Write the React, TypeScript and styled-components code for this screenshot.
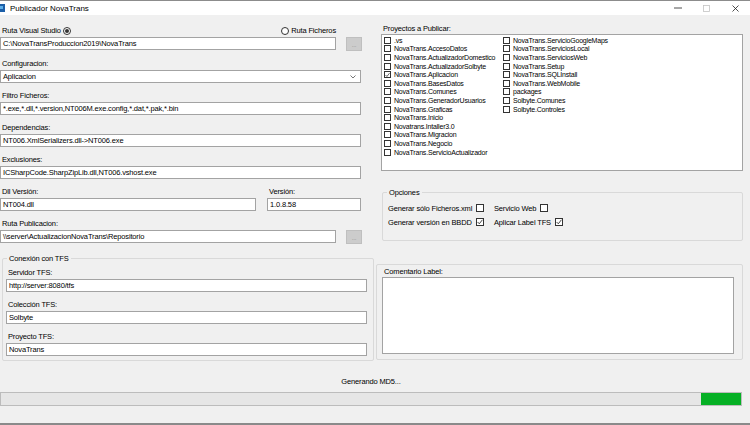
import React from 'react'
import styled, { createGlobalStyle } from 'styled-components'

const GlobalStyle = createGlobalStyle`
  html, body {
    margin: 0;
    padding: 0;
    background: #f0f0f0;
    overflow: hidden;
  }
  body {
    font-family: "Liberation Sans", Arial, sans-serif;
    font-size: 7.5px;
    letter-spacing: -0.15px;
    color: #000;
  }
  * { box-sizing: border-box; }
`

const Window = styled.div`
  width: 750px;
  height: 425px;
  display: flex;
  flex-direction: column;
  background: #f0f0f0;
  overflow: hidden;
`

const TitleBar = styled.div`
  height: 15px;
  flex: none;
  display: flex;
  align-items: center;
  background: #fff;
  border-top: 1px solid #8c8c8c;
`

const AppIcon = styled.svg`
  flex: none;
  margin-right: 5px;
`

const Title = styled.span`
  flex: 1;
  font-size: 8px;
  letter-spacing: 0;
`

const CtrlButton = styled.div`
  width: 29px;
  height: 14px;
  display: flex;
  align-items: center;
  justify-content: center;
`

const Main = styled.div`
  display: grid;
  grid-template-columns: 375px 375px;
  flex: none;
`

const LeftCol = styled.div`
  display: flex;
  flex-direction: column;
  gap: 8px;
  padding-top: 11px;
`

const RightCol = styled.div`
  display: flex;
  flex-direction: column;
  padding: 9px 7px 0 1px;
`

const Field = styled.div<{ $w?: number }>`
  display: flex;
  flex-direction: column;
  gap: 2px;
  width: ${p => (p.$w ? `${p.$w}px` : 'auto')};
`

const Label = styled.div`
  height: 9px;
  line-height: 9px;
  padding-left: 2px;
  white-space: nowrap;
  display: flex;
  align-items: center;
`

const LabelRow = styled.div`
  width: 336px;
  height: 9px;
  display: flex;
  align-items: center;
  padding-left: 2px;
`

const RadioWrap = styled.label<{ $push?: boolean }>`
  display: flex;
  align-items: center;
  gap: 2px;
  white-space: nowrap;
  margin-left: ${p => (p.$push ? 'auto' : '0')};
`

const RadioCircle = styled.span<{ $on?: boolean }>`
  width: 8px;
  height: 8px;
  border-radius: 50%;
  border: 1px solid #333;
  background: #fff;
  display: flex;
  align-items: center;
  justify-content: center;
  &::after {
    content: '';
    width: 4px;
    height: 4px;
    border-radius: 50%;
    background: ${p => (p.$on ? '#333' : 'transparent')};
  }
`

const TextBox = styled.div<{ $w?: number }>`
  width: ${p => (p.$w ? `${p.$w}px` : '100%')};
  height: 13px;
  line-height: 11px;
  background: #fff;
  border: 1px solid #a3a3a3;
  padding-left: 2px;
  white-space: nowrap;
  overflow: hidden;
`

const InputRow = styled.div`
  display: flex;
  gap: 10px;
  align-items: flex-start;
`

const BrowseButton = styled.div`
  width: 16px;
  height: 14px;
  background: #cccccc;
  border: 1px solid #bfbfbf;
  color: #8a8a8a;
  font-size: 6px;
  line-height: 14px;
  text-align: center;
`

const Combo = styled.div`
  width: 361px;
  height: 13px;
  background: #fff;
  border: 1px solid #a3a3a3;
  padding: 0 4px 0 2px;
  display: flex;
  align-items: center;
  justify-content: space-between;
`

const SplitRow = styled.div`
  display: flex;
  gap: 11px;
`

const GroupBox = styled.div<{ $ml?: number; $h: number }>`
  position: relative;
  margin-left: ${p => p.$ml ?? 0}px;
  height: ${p => p.$h}px;
  border: 1px solid #d9d9d9;
  border-radius: 2px;
`

const Legend = styled.span`
  position: absolute;
  top: -5px;
  left: 4px;
  padding: 0 2px;
  line-height: 9px;
  background: #f0f0f0;
`

const TfsGroup = styled(GroupBox)`
  width: 372px;
  margin-top: 6px;
  padding: 9px 0 0 3px;
  display: flex;
  flex-direction: column;
  gap: 8px;
`

const ProjectsBlock = styled.div`
  display: flex;
  flex-direction: column;
  gap: 1px;
  margin-left: 5px;
`

const ListBox = styled.div`
  height: 137px;
  background: #fff;
  border: 1px solid #a3a3a3;
  padding: 1px 0 0 2px;
  display: grid;
  grid-auto-flow: column;
  grid-template-rows: repeat(14, 8.6px);
  grid-template-columns: 119px 1fr;
  align-content: start;
  font-size: 7px;
  letter-spacing: -0.2px;
`

const ListItem = styled.div`
  display: flex;
  align-items: center;
  gap: 3px;
  white-space: nowrap;
`

const Box = styled.span<{ $size: number }>`
  flex: none;
  width: ${p => p.$size}px;
  height: ${p => p.$size}px;
  border: 1px solid #333;
  background: #fff;
  display: flex;
  align-items: center;
  justify-content: center;
`

const OptionsGroup = styled(GroupBox)`
  margin-top: 21px;
  padding: 8px 0 0 5px;
  display: grid;
  grid-template-columns: 106px auto;
  grid-template-rows: 14px 14px;
  align-content: start;
`

const OptionItem = styled.div`
  display: flex;
  align-items: center;
  gap: 4px;
  white-space: nowrap;
`

const CommentGroup = styled(GroupBox)`
  margin-top: 23px;
  padding: 2px 8px 0 5px;
  display: flex;
  flex-direction: column;
  gap: 1px;
`

const TextArea = styled.div`
  height: 77px;
  background: #fff;
  border: 1px solid #a3a3a3;
`

const Status = styled.div`
  width: 742px;
  margin-top: 16px;
  height: 9px;
  line-height: 9px;
  text-align: center;
`

const Progress = styled.div`
  width: 742px;
  height: 14px;
  margin-top: 6px;
  background: #e6e6e6;
  border: 1px solid #bcbcbc;
  display: flex;
  justify-content: flex-end;
`

const ProgressChunk = styled.div`
  width: 40px;
  height: 100%;
  background: #06b025;
`

const Spacer = styled.div`
  flex: 1;
`

const BottomEdge = styled.div`
  height: 2px;
  flex: none;
  background: #8a8a8a;
`

const Check = () => (
  <svg width="6" height="6" viewBox="0 0 6 6">
    <polyline points="0.6,3 2.3,4.8 5.4,0.8" fill="none" stroke="#333" strokeWidth="0.9" />
  </svg>
)

const Chevron = () => (
  <svg width="6" height="4" viewBox="0 0 6 4">
    <polyline points="0.5,0.5 3,3 5.5,0.5" fill="none" stroke="#666" strokeWidth="0.9" />
  </svg>
)

const col1 = [
  '.vs',
  'NovaTrans.AccesoDatos',
  'NovaTrans.ActualizadorDomestico',
  'NovaTrans.ActualizadorSolbyte',
  'NovaTrans.Aplicacion',
  'NovaTrans.BasesDatos',
  'NovaTrans.Comunes',
  'NovaTrans.GeneradorUsuarios',
  'NovaTrans.Graficas',
  'NovaTrans.Inicio',
  'Novatrans.Intaller3.0',
  'NovaTrans.Migracion',
  'NovaTrans.Negocio',
  'NovaTrans.ServicioActualizador',
]

const col2 = [
  'NovaTrans.ServicioGoogleMaps',
  'NovaTrans.ServiciosLocal',
  'NovaTrans.ServiciosWeb',
  'NovaTrans.Setup',
  'NovaTrans.SQLInstall',
  'NovaTrans.WebMobile',
  'packages',
  'Solbyte.Comunes',
  'Solbyte.Controles',
]

const projects = [...col1, ...col2]
const checkedProjects = ['NovaTrans.Aplicacion']

const options = [
  { label: 'Generar sólo Ficheros.xml', on: false },
  { label: 'Generar versión en BBDD', on: true },
  { label: 'Servicio Web', on: false },
  { label: 'Aplicar Label TFS', on: true },
]

const App: React.FC = () => {
  return (
    <Window>
      <GlobalStyle />
      <TitleBar>
        <AppIcon width="5" height="8" viewBox="0 0 5 8">
          <rect x="0" y="0" width="5" height="8" fill="#1c5fa8" />
          <rect x="0" y="2" width="3" height="3" fill="#5fb0e8" />
        </AppIcon>
        <Title>Publicador NovaTrans</Title>
        <CtrlButton>
          <svg width="8" height="2" viewBox="0 0 8 2">
            <line x1="0" y1="1" x2="8" y2="1" stroke="#222" strokeWidth="0.8" />
          </svg>
        </CtrlButton>
        <CtrlButton>
          <svg width="7" height="7" viewBox="0 0 7 7">
            <rect x="0.5" y="0.5" width="6" height="6" fill="none" stroke="#c4c4c4" strokeWidth="0.8" />
          </svg>
        </CtrlButton>
        <CtrlButton>
          <svg width="7" height="7" viewBox="0 0 7 7">
            <path d="M0.5 0.5 L6.5 6.5 M6.5 0.5 L0.5 6.5" stroke="#222" strokeWidth="0.8" />
          </svg>
        </CtrlButton>
      </TitleBar>

      <Main>
        <LeftCol>
          <Field>
            <LabelRow>
              <RadioWrap>
                Ruta Visual Studio
                <RadioCircle $on />
              </RadioWrap>
              <RadioWrap $push>
                <RadioCircle />
                Ruta Ficheros
              </RadioWrap>
            </LabelRow>
            <InputRow>
              <TextBox $w={336}>C:\NovaTransProduccion2019\NovaTrans</TextBox>
              <BrowseButton>...</BrowseButton>
            </InputRow>
          </Field>

          <Field>
            <Label>Configuracion:</Label>
            <Combo>
              <span>Aplicacion</span>
              <Chevron />
            </Combo>
          </Field>

          <Field>
            <Label>Filtro Ficheros:</Label>
            <TextBox $w={361}>*.exe,*.dll,*.version,NT006M.exe.config,*.dat,*.pak,*.bin</TextBox>
          </Field>

          <Field>
            <Label>Dependencias:</Label>
            <TextBox $w={361}>NT006.XmlSerializers.dll-&gt;NT006.exe</TextBox>
          </Field>

          <Field>
            <Label>Exclusiones:</Label>
            <TextBox $w={361}>ICSharpCode.SharpZipLib.dll,NT006.vshost.exe</TextBox>
          </Field>

          <SplitRow>
            <Field $w={256}>
              <Label>Dll Versión:</Label>
              <TextBox>NT004.dll</TextBox>
            </Field>
            <Field $w={94}>
              <Label>Versión:</Label>
              <TextBox>1.0.8.58</TextBox>
            </Field>
          </SplitRow>

          <Field>
            <Label>Ruta Publicacion:</Label>
            <InputRow>
              <TextBox $w={336}>\\server\ActualizacionNovaTrans\Repositorio</TextBox>
              <BrowseButton>...</BrowseButton>
            </InputRow>
          </Field>

          <TfsGroup $ml={2} $h={103}>
            <Legend>Conexión con TFS</Legend>
            <Field>
              <Label>Servidor TFS:</Label>
              <TextBox $w={361}>http://server:8080/tfs</TextBox>
            </Field>
            <Field>
              <Label>Colección TFS:</Label>
              <TextBox $w={361}>Solbyte</TextBox>
            </Field>
            <Field>
              <Label>Proyecto TFS:</Label>
              <TextBox $w={361}>NovaTrans</TextBox>
            </Field>
          </TfsGroup>
        </LeftCol>

        <RightCol>
          <ProjectsBlock>
            <Label>Proyectos a Publicar:</Label>
            <ListBox>
              {projects.map(p => (
                <ListItem key={p}>
                  <Box $size={7}>{checkedProjects.includes(p) ? <Check /> : null}</Box>
                  {p}
                </ListItem>
              ))}
            </ListBox>
          </ProjectsBlock>

          <OptionsGroup $ml={6} $h={49}>
            <Legend>Opciones</Legend>
            {[options[0], options[2], options[1], options[3]].map(o => (
              <OptionItem key={o.label}>
                {o.label}
                <Box $size={8}>{o.on ? <Check /> : null}</Box>
              </OptionItem>
            ))}
          </OptionsGroup>

          <CommentGroup $ml={0} $h={96}>
            <Label>Comentario Label:</Label>
            <TextArea />
          </CommentGroup>
        </RightCol>
      </Main>

      <Status>Generando MD5...</Status>
      <Progress>
        <ProgressChunk />
      </Progress>
      <Spacer />
      <BottomEdge />
    </Window>
  )
}

export default App
